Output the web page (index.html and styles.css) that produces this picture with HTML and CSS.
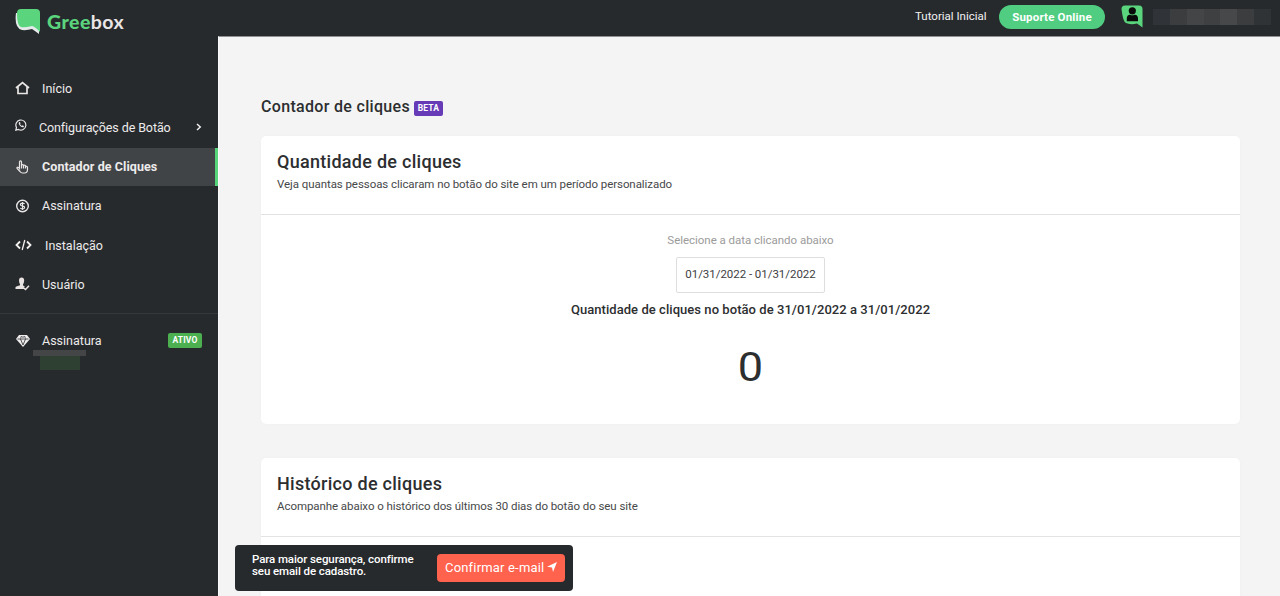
FILE: index.html
```html
<!DOCTYPE html>
<html lang="pt-BR">
<head>
<meta charset="utf-8">
<title>Greebox</title>
<link rel="stylesheet" href="styles.css">
</head>
<body>
<header class="topbar">
  <div class="brand">
    <svg class="brand-mark" width="26" height="27" viewBox="0 0 26 27"><path d="M1 5Q-1 20 7 22Q12 22.500 17 21Q20 23 24 26V17L21 5Z" fill="#e4e9ea"/><path d="M6 1H21Q25 1 25 5V24Q20 18.500 17 18Q9 20 6 19Q2 18 2 5Q2 1 6 1Z" fill="#5bd57d"/></svg>
    <span class="brand-name"><b>Gree</b>box</span>
  </div>
  <nav class="top-actions">
    <a class="tutorial">Tutorial Inicial</a>
    <a class="support">Suporte Online</a>
    <svg class="avatar" width="22" height="23" viewBox="0 0 22 23"><path d="M4 .5H18Q21.500 .5 21.500 4V22.500L16 18.500Q9 20 5 18Q2 17 .5 4Q.5 .5 4 .5Z" fill="#5bd57d"/><circle cx="11.300" cy="5.800" r="3.600" fill="#080b09"/><path d="M5.800 16.300V13.500Q5.800 9.800 9 9.700Q11.300 11 13.600 9.700Q17 9.800 17 13.500V16.300Z" fill="#080b09"/></svg>
    <span class="masked-name"><i class="m1"></i><i class="m2"></i><i class="m3"></i><i class="m4"></i><i class="m5"></i><i class="m2"></i><i class="m6"></i></span>
  </nav>
</header>
<div class="shell">
  <aside class="sidebar">
    <nav class="menu">
      <a class="item"><svg class="icon" width="15" height="14" viewBox="0 0 15 14"><path d="M1 7L7.500 1.500L14 7M3 6V12.500H12V6" fill="none" stroke="#e9e6e6" stroke-width="1.700"/></svg><span class="label">Início</span></a>
      <a class="item item-config"><svg class="icon icon-chat" width="12" height="12" viewBox="0 0 12 12"><path d="M.8 11.200L1.500 8.500A5 5 0 1 1 3.600 10.500Z" fill="none" stroke="#e9e6e6" stroke-width="1.200"/><path d="M4.300 3Q3 4 4.300 6Q6.500 9 8.500 8.200L9 7.100L7.500 6.300L6.800 7Q5.500 6.300 5 5.100L5.500 4.500L5 3Z" fill="#e9e6e6"/></svg><span class="label wide">Configurações de Botão</span><svg class="chevron" width="6" height="8" viewBox="0 0 6 8"><path d="M1 1L4.300 4L1 7" fill="none" stroke="#f3f3f3" stroke-width="1.400"/></svg></a>
      <a class="item active"><svg class="icon" width="14" height="14" viewBox="0 0 14 14"><path d="M4 8V2Q4 .8 5 .8Q6 .8 6 2V6V5Q7 4.200 8 5V6.200V5.500Q9 4.700 10 5.700V6.700Q12 5.900 12 7.500V9.500Q12 13 9 13H7Q5.500 13 4.500 11.500L1.600 8.500Q1 7.500 2 7.200Q3 7.200 4 8.500ZM6 6V8.500M8 6V8.500M10 6.500V8.500" fill="none" stroke="#e9e5e5" stroke-width="1.200"/></svg><span class="label">Contador de Cliques</span></a>
      <a class="item"><svg class="icon" width="14" height="14" viewBox="0 0 14 14"><circle cx="7" cy="7" r="5.800" fill="none" stroke="#e9e6e6" stroke-width="1.400"/><path d="M9.200 4.700Q7 3.700 5.500 4.500Q4.300 5.700 5.500 6.500L8.300 7.300Q9.700 8.300 8.500 9.500Q7 10.300 4.800 9.200M7 3V11" fill="none" stroke="#e9e6e6" stroke-width="1.200"/></svg><span class="label">Assinatura</span></a>
      <a class="item item-install"><svg class="icon" width="17" height="12" viewBox="0 0 17 12"><path d="M5 2.500L1.500 6L5 9.500M12 2.500L15.500 6L12 9.500" fill="none" stroke="#f3f0f0" stroke-width="1.800"/><path d="M9.800 1L7.200 11" stroke="#f3f0f0" stroke-width="1.300"/></svg><span class="label">Instalação</span></a>
      <a class="item"><svg class="icon" width="14" height="14" viewBox="0 0 14 14"><path d="M3.500 3.500Q3.500 .5 6 .5Q8.700 .5 8.700 3.500Q8.500 6.200 7.500 7.200V8.500L9.300 9.300L8.200 10.400L9.800 12H0V10.300Q0 9.500 1.500 9.200L4.500 8.300V7.100Q3.600 6 3.500 3.500Z" fill="#e9e2e2"/><path d="M8 10.700L10 12.500L13.500 8.700" fill="none" stroke="#e9e2e2" stroke-width="1.500"/></svg><span class="label">Usuário</span></a>
    </nav>
    <div class="plan">
      <svg class="icon" width="14" height="12" viewBox="0 0 14 12"><path d="M3 0H11L14 4L7 12L0 4Z" fill="#f0eded"/><path d="M1.500 4H12.500M4.500 4L7 10L9.500 4M4.500 3.500L5.500 1M9.500 3.500L8.500 1M7 1V3" fill="none" stroke="#272a2d" stroke-width=".8"/></svg>
      <span class="label">Assinatura</span><span class="tag tag-active">ATIVO</span>
    </div>
    <div class="mask mask-top"></div>
    <div class="mask mask-bottom"></div>
  </aside>
  <main class="content">
    <div class="heading"><h1>Contador de cliques</h1><span class="tag tag-beta">BETA</span></div>
    <section class="card card-count">
      <div class="card-head">
        <h2>Quantidade de cliques</h2>
        <p class="sub-count">Veja quantas pessoas clicaram no botão do site em um período personalizado</p>
      </div>
      <div class="card-body">
        <p class="hint">Selecione a data clicando abaixo</p>
        <div class="range">01/31/2022 - 01/31/2022</div>
        <p class="summary">Quantidade de cliques no botão de 31/01/2022 a 31/01/2022</p>
        <div class="count">0</div>
      </div>
    </section>
    <section class="card card-history">
      <div class="card-head">
        <h2>Histórico de cliques</h2>
        <p class="sub-history">Acompanhe abaixo o histórico dos últimos 30 dias do botão do seu site</p>
      </div>
    </section>
  </main>
</div>
<div class="toast">
  <p>Para maior segurança, confirme<br>seu email de cadastro.</p>
  <a class="confirm"><span>Confirmar e-mail</span><svg width="10" height="10" viewBox="0 0 10 10"><path d="M10 0L6 10L5 5.500L0 4.800Z" fill="#fff"/></svg></a>
</div>
</body>
</html>
```
FILE: styles.css
```css
* { box-sizing: border-box; }
body { margin: 0; height: 596px; overflow: hidden; background: #f4f4f4; font-family: Roboto, "Liberation Sans", sans-serif; color: #2c2e30; }
h1, h2, p { margin: 0; font-weight: 500; white-space: nowrap; }
svg { display: block; flex: none; }
.topbar { height: 36px; background: #272a2d; display: flex; justify-content: space-between; }
.brand { display: flex; padding: 8px 0 0 15px; gap: 6px; }
.brand-name { font: 700 19.500px/27px Lato, sans-serif; color: #e9e6e6; letter-spacing: .45px; }
.brand-name b { color: #5bd57d; }
.top-actions { display: flex; align-items: flex-start; padding-right: 9px; }
.tutorial { margin-top: 8px; width: 71px; font-size: 11.500px; line-height: 16px; color: #f1f1f1; white-space: nowrap; }
.support { margin: 5px 0 0 13px; width: 106px; height: 24px; border-radius: 12px; background: #50cd80; color: #fff; font-size: 11.500px; font-weight: 700; line-height: 24px; text-align: center; letter-spacing: .18px; }
.avatar { margin: 5px 0 0 16px; }
.masked-name { display: flex; margin: 9px 0 0 10px; width: 118px; height: 16px; }
.masked-name i { flex: 1; }
.m1 { background: #303337; }
.m2 { background: #3b3d3f; }
.m3 { background: #434547; }
.m4 { background: #3e4042; }
.m5 { background: #46484a; }
.m6 { background: #303336; }
.shell { display: flex; height: 560px; overflow: hidden; }
.sidebar { width: 218px; flex: none; background: #272a2d; padding-top: 33px; color: #edebeb; }
.menu { display: flex; flex-direction: column; gap: 1.300px; height: 245px; border-bottom: 1px solid #36393c; }
.item { display: flex; align-items: center; height: 38px; flex: none; padding-left: 15px; font-size: 12.500px; }
.icon { margin-right: 12px; }
.item .icon:not([width="17"]):not([width="12"]) { width: 15px; }
.item-config .icon { margin: -4px 12px 0 0; }
.item-install .icon { margin-right: 13px; }
.wide { width: 131px; letter-spacing: -.1px; }
.chevron { margin-left: 26px; }
.active { background: #414447; border-right: 3px solid #55d47b; font-weight: 700; }
.label { white-space: nowrap; letter-spacing: 0; }
.label.wide { letter-spacing: -.1px; }
.active .label { letter-spacing: .08px; }
.plan { display: flex; align-items: center; height: 15px; margin-top: 19px; padding: 0 16px 0 16px; font-size: 12.500px; }
.tag { display: block; color: #fff; font-weight: 700; font-size: 8.500px; line-height: 15px; height: 15px; text-align: center; border-radius: 2px; letter-spacing: .15px; }
.tag-active { width: 34px; margin-left: auto; background: #4caf50; }
.mask-top { width: 53px; height: 6px; margin: 2px 0 0 33px; background: #434547; }
.mask-bottom { width: 40px; height: 14px; margin-left: 40px; background: #2e4031; }
.content { flex: 1; padding: 59px 40px 0 42px; border-left: 1px solid #fafafa; border-top: 1px solid #8e9091; }
.heading { display: flex; align-items: center; gap: 4px; height: 22px; }
h1 { font-size: 16px; line-height: 22px; width: 149px; letter-spacing: .32px; }
.tag-beta { width: 29px; margin-top: 2px; background: #673ab7; }
.card { background: #fff; border-radius: 5px; box-shadow: 0 0 2px #ededed; }
.card-count { height: 288px; margin-top: 18px; }
.card-history { height: 288px; margin-top: 34px; }
.card-head { height: 79px; padding: 15px 16px 0; border-bottom: 1px solid #e3e3e3; }
h2 { font-size: 18px; line-height: 22px; letter-spacing: .28px; }
.card-head p { font-size: 11.500px; font-weight: 400; line-height: 16px; margin-top: 3px; color: #46484a; letter-spacing: -.065px; }
.card-body { display: flex; flex-direction: column; align-items: center; padding-top: 17px; }
.hint { font-size: 11.500px; font-weight: 400; line-height: 16px; color: #9b9b9b; letter-spacing: -.03px; }
.range { width: 149px; height: 36px; margin-top: 9px; border: 1px solid #dedede; border-radius: 2px; font-size: 11.500px; line-height: 33px; text-align: center; color: #3e4042; letter-spacing: -.04px; }
.summary { margin-top: 9px; font-size: 13px; line-height: 16px; letter-spacing: .05px; }
.count { margin-top: 24px; font-size: 41px; line-height: 50px; transform: scaleX(1.1); }
.toast { position: absolute; left: 235px; top: 545px; width: 338px; height: 46px; border-radius: 4px; background: #272a2d; display: flex; justify-content: space-between; padding: 9px 8px 0 17px; color: #fff; }
.toast p { font-size: 11.500px; line-height: 12px; margin-top: -1px; letter-spacing: -.09px; }
.confirm { width: 128px; height: 28px; border-radius: 4px; background: #ff624d; display: flex; align-items: center; padding: 0 0 2px 8px; gap: 3px; font-size: 13px; white-space: nowrap; letter-spacing: .18px; }
```
